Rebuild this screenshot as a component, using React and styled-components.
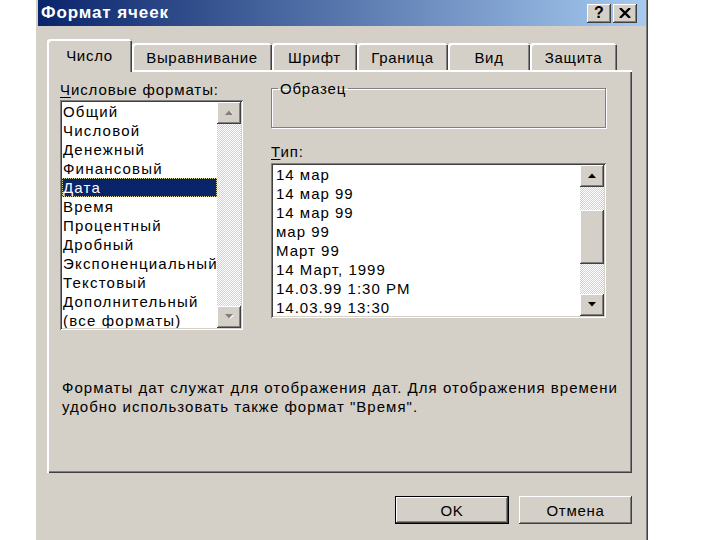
import React from 'react';
import styled, { createGlobalStyle, css } from 'styled-components';

const Global = createGlobalStyle`
  html, body { margin: 0; padding: 0; background: #fff; }
  body { font-family: "Liberation Sans", Arial, sans-serif; }
`;

const raised = css`
  background: #d4d0c8;
  box-shadow: inset -1px -1px #404040, inset 1px 1px #fff,
    inset -2px -2px #808080, inset 2px 2px #d4d0c8;
`;

const sunken = css`
  box-shadow: inset 1px 1px #808080, inset -1px -1px #fff,
    inset 2px 2px #404040, inset -2px -2px #d4d0c8;
`;

const Page = styled.div`
  width: 720px;
  height: 540px;
  overflow: hidden;
  background: #fff;
`;

const Dialog = styled.div`
  margin-left: 36px;
  width: 612px;
  height: 540px;
  box-sizing: border-box;
  padding-left: 2px;
  background: #d4d0c8;
  border-right: 1px solid #404040;
  box-shadow: inset -1px 0 #808080;
  display: flex;
  flex-direction: column;
`;

const TitleBar = styled.div`
  height: 26px;
  margin-right: 1px;
  padding: 0 9px 0 3px;
  display: flex;
  align-items: center;
  justify-content: space-between;
  background: linear-gradient(to right, #0a246a, #a6caf0);
`;

const Title = styled.span`
  color: #fff;
  font-weight: bold;
  font-size: 17px;
  letter-spacing: 0.9px;
`;

const Controls = styled.div`
  display: flex;
  gap: 2px;
`;

const CtrlButton = styled.div`
  ${raised};
  width: 24px;
  height: 19px;
  display: flex;
  align-items: center;
  justify-content: center;
  font-weight: bold;
  font-size: 16px;
  color: #000;
`;

const Body = styled.div`
  padding: 13px 14px 0 9px;
  display: flex;
  flex-direction: column;
`;

const TabStrip = styled.div`
  height: 31px;
  display: flex;
  align-items: flex-end;
  position: relative;
  z-index: 1;
`;

const Tab = styled.div`
  box-sizing: border-box;
  width: ${(p) => p.$w}px;
  height: ${(p) => (p.$active ? 33 : 27)}px;
  margin-bottom: ${(p) => (p.$active ? -2 : 0)}px;
  background: #d4d0c8;
  border-radius: 3px 3px 0 0;
  box-shadow: inset 2px 2px #fff, inset -1px 0 #404040, inset -2px 0 #808080;
  display: flex;
  align-items: center;
  justify-content: center;
  padding-top: ${(p) => (p.$active ? 0 : 2)}px;
  font-size: 15px;
  letter-spacing: 0.7px;
  color: #000;
`;

const Panel = styled.div`
  box-sizing: border-box;
  width: 585px;
  height: 403px;
  padding: 10px 13px 0;
  background: #d4d0c8;
  box-shadow: inset 2px 2px #fff, inset -1px -1px #404040, inset -2px -2px #808080;
`;

const Columns = styled.div`
  display: grid;
  grid-template-columns: 183px 335px;
  column-gap: 28px;
  align-items: start;
`;

const Column = styled.div`
  display: flex;
  flex-direction: column;
`;

const Label = styled.div`
  font-size: 15px;
  line-height: 20px;
  letter-spacing: 0.9px;
  color: #000;
  margin-bottom: ${(p) => p.$mb || 0}px;
  u { text-decoration: underline; text-underline-offset: 2px; }
`;

const Group = styled.fieldset`
  box-sizing: border-box;
  height: 48px;
  margin: 0 0 14px 0;
  padding: 0;
  border: 1px solid #808080;
  box-shadow: 1px 1px #fff, inset 1px 1px #fff;
  border-radius: 0;
`;

const Legend = styled.legend`
  margin-left: 6px;
  padding: 0 2px;
  font-size: 15px;
  line-height: 17px;
  letter-spacing: 0.8px;
  color: #000;
`;

const ListBox = styled.div`
  box-sizing: border-box;
  width: ${(p) => p.$w}px;
  height: ${(p) => p.$h}px;
  background: #fff;
  padding: 2px;
  display: flex;
  ${sunken};
`;

const Items = styled.div`
  flex: 1;
  overflow: hidden;
`;

const Item = styled.div`
  height: 19px;
  line-height: 19px;
  padding-left: ${(p) => p.$pad}px;
  font-size: 15px;
  letter-spacing: ${(p) => p.$ls}px;
  white-space: nowrap;
  color: ${(p) => (p.$selected ? '#fff' : '#000')};
  background: ${(p) => (p.$selected ? '#0a246a' : 'transparent')};
  outline: ${(p) => (p.$selected ? '1px dotted #d8d4a0' : 'none')};
  outline-offset: -1px;
`;

const ScrollBar = styled.div`
  width: 24px;
  display: flex;
  flex-direction: column;
`;

const Arrow = styled.div`
  ${raised};
  height: 22px;
  flex: none;
  display: flex;
  align-items: center;
  justify-content: center;
`;

const Track = styled.div`
  flex: 1;
  display: flex;
  flex-direction: column;
  background: repeating-conic-gradient(#fff 0 25%, #d4d0c8 0 50%) 0 0 / 2px 2px;
`;

const Thumb = styled.div`
  ${raised};
  height: ${(p) => p.$h}px;
  margin-top: ${(p) => p.$top}px;
`;

const Description = styled.div`
  margin-top: 48px;
  padding-left: 2px;
  font-size: 15px;
  line-height: 19px;
  letter-spacing: 1.02px;
  color: #000;
`;

const Footer = styled.div`
  margin-top: 23px;
  padding-right: 1px;
  display: flex;
  justify-content: flex-end;
  gap: 10px;
`;

const Button = styled.div`
  ${raised};
  box-sizing: border-box;
  width: ${(p) => p.$w}px;
  height: 28px;
  display: flex;
  align-items: center;
  justify-content: center;
  font-size: 15px;
  letter-spacing: 0.7px;
  color: #000;
  ${(p) =>
    p.$default &&
    css`
      border: 1px solid #000;
    `}
`;

const ArrowIcon = ({ down, disabled }) => (
  <svg width="10" height="6" viewBox="0 0 10 6">
    {disabled && (
      <polygon
        points={down ? '2,1 10,1 6,5' : '2,5 10,5 6,1'}
        fill="#fff"
      />
    )}
    <polygon
      points={down ? '1,0 9,0 5,4.5' : '1,5 9,5 5,0.5'}
      fill={disabled ? '#808080' : '#000'}
    />
  </svg>
);

const CloseIcon = () => (
  <svg width="12" height="10" viewBox="0 0 12 10">
    <path d="M1 0 L11 10 M11 0 L1 10" stroke="#000" strokeWidth="2.4" />
  </svg>
);

const formats = [
  'Общий',
  'Числовой',
  'Денежный',
  'Финансовый',
  'Дата',
  'Время',
  'Процентный',
  'Дробный',
  'Экспоненциальный',
  'Текстовый',
  'Дополнительный',
  '(все форматы)',
];

const types = [
  '14 мар',
  '14 мар 99',
  '14 мар 99',
  'мар 99',
  'Март 99',
  '14 Март, 1999',
  '14.03.99 1:30 PM',
  '14.03.99 13:30',
];

const tabs = [
  ['Число', 85],
  ['Выравнивание', 140],
  ['Шрифт', 85],
  ['Граница', 91],
  ['Вид', 82],
  ['Защита', 87],
];

export default function App() {
  return (
    <Page>
      <Global />
      <Dialog>
        <TitleBar>
          <Title>Формат ячеек</Title>
          <Controls>
            <CtrlButton>?</CtrlButton>
            <CtrlButton>
              <CloseIcon />
            </CtrlButton>
          </Controls>
        </TitleBar>
        <Body>
          <TabStrip>
            {tabs.map(([name, w], i) => (
              <Tab key={name} $w={w} $active={i === 0}>
                {name}
              </Tab>
            ))}
          </TabStrip>
          <Panel>
            <Columns>
              <Column>
                <Label>
                  <u>Ч</u>исловые форматы:
                </Label>
                <ListBox $w={183} $h={230}>
                  <Items>
                    {formats.map((f) => (
                      <Item key={f} $pad={1} $ls={1.2} $selected={f === 'Дата'}>
                        {f}
                      </Item>
                    ))}
                  </Items>
                  <ScrollBar>
                    <Arrow>
                      <ArrowIcon disabled />
                    </Arrow>
                    <Track />
                    <Arrow>
                      <ArrowIcon down disabled />
                    </Arrow>
                  </ScrollBar>
                </ListBox>
              </Column>
              <Column>
                <Group>
                  <Legend>Образец</Legend>
                </Group>
                <Label $mb={1}>
                  <u>Т</u>ип:
                </Label>
                <ListBox $w={335} $h={155}>
                  <Items>
                    {types.map((t, i) => (
                      <Item key={i} $pad={3} $ls={1}>
                        {t}
                      </Item>
                    ))}
                  </Items>
                  <ScrollBar>
                    <Arrow>
                      <ArrowIcon />
                    </Arrow>
                    <Track>
                      <Thumb $top={23} $h={54} />
                    </Track>
                    <Arrow>
                      <ArrowIcon down />
                    </Arrow>
                  </ScrollBar>
                </ListBox>
              </Column>
            </Columns>
            <Description>
              Форматы дат служат для отображения дат. Для отображения времени
              <br />
              удобно использовать также формат "Время".
            </Description>
          </Panel>
          <Footer>
            <Button $w={114} $default>
              OK
            </Button>
            <Button $w={113}>Отмена</Button>
          </Footer>
        </Body>
      </Dialog>
    </Page>
  );
}
